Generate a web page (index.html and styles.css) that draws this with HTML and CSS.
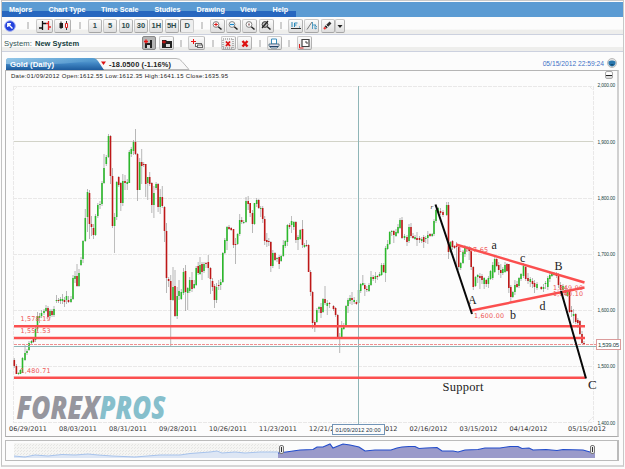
FILE: index.html
```html
<!DOCTYPE html>
<html lang="en">
<head>
<meta charset="utf-8">
<title>Gold (Daily)</title>
<link rel="stylesheet" href="styles.css">
</head>
<body>
<div class="app">
  <nav class="menu">
    <span class="m1">Majors</span><span class="m2">Chart Type</span><span class="m3">Time Scale</span><span class="m4">Studies</span><span class="m5">Drawing</span><span class="m6">View</span><span class="m7">Help</span>
  </nav>
  <div class="bar bar-one">
    <svg class="pointer" viewBox="0 0 12 12"><circle cx="6" cy="6" r="5.3" fill="#2442dc" stroke="#9dabf2"/><path d="M8.5 8.5L4 4M3.8 7V3.8H7" fill="none" stroke="#fff" stroke-width="1.4"/></svg>
    <i class="sep s-a"></i>
    <span class="btn w16"><svg viewBox="0 0 14 11"><path d="M4.500 1v9M1 8h3.500M4.500 3.500H8" stroke="#111" stroke-width="1.300" fill="none"/><path d="M10.500 1v9M8 3.500h2.500M10.500 7H13" stroke="#d22" stroke-width="1.300" fill="none"/></svg></span>
    <span class="btn w16"><svg viewBox="0 0 14 11"><path d="M5 1.500v7.500M10.500 1v9" stroke="#333"/><path d="M3.500 3h3.500v5H3.500z" fill="#222"/><path d="M9.500 3.500h2v4h-2z" fill="#fff" stroke="#d22"/></svg></span>
    <i class="sep s-b"></i>
    <span class="btn">1</span><span class="btn">5</span><span class="btn">10</span><span class="btn">30</span><span class="btn">1H</span><span class="btn">5H</span><span class="btn on">D</span>
    <i class="sep s-c"></i>
    <span class="btn w15"><svg viewBox="0 0 12 11"><path d="M7 6.500l3.500 3" stroke="#222" stroke-width="1.500"/><circle cx="5" cy="4.500" r="2.900" fill="#fff" stroke="#777" stroke-width=".9"/><path d="M3.200 4.500h3.600M5 2.700v3.600" stroke="#d11"/></svg></span>
    <span class="btn w15"><svg viewBox="0 0 12 11"><path d="M7 6.500l3.500 3" stroke="#222" stroke-width="1.500"/><circle cx="5" cy="4.500" r="2.900" fill="#fff" stroke="#777" stroke-width=".9"/><path d="M3 4.500h4" stroke="#1889cc" stroke-width="1.300"/></svg></span>
    <span class="btn w15"><svg viewBox="0 0 12 11"><path d="M7 6.500l3.500 3" stroke="#222" stroke-width="1.500"/><circle cx="5" cy="4.500" r="2.900" fill="#fff" stroke="#777" stroke-width=".9"/><path d="M4 3.500h2v2H4z" fill="#a88"/></svg></span>
    <span class="btn w15"><svg viewBox="0 0 12 11"><path d="M7 6.500l3.500 3" stroke="#222" stroke-width="1.500"/><circle cx="5" cy="4.500" r="2.900" fill="#bbb" stroke="#333" stroke-width=".9"/><path d="M2 8l6-7" stroke="#222" stroke-width="1.200"/></svg></span>
    <i class="sep s-d"></i>
    <span class="btn w15"><svg viewBox="0 0 12 11"><path d="M1 8.500h10" stroke="#333"/><path d="M2 2v5M4.500 7V3h3M4.500 5h2M9 7h1" stroke="#2a88b8" fill="none"/></svg></span>
    <span class="btn w15"><svg viewBox="0 0 12 11"><path d="M1 9.500L6 2" stroke="#777"/><path d="M6.500 2v7M6.500 5h2M9 4v5l2-1M9 5l2 2" stroke="#2a88b8" fill="none" stroke-width=".8"/></svg></span>
    <span class="btn w14"><svg viewBox="0 0 12 11"><path d="M3.500 7.500l5-5" stroke="#333" stroke-width="2.600"/><path d="M4 5l2 2" stroke="#ddd"/><path d="M2 9l1.500-1.500" stroke="#e33" stroke-width="2.300"/></svg></span><span class="btn drop"><svg viewBox="0 0 8 8"><path d="M1.500 3h5L4 6z" fill="#222"/></svg></span>
  </div>
  <div class="bar bar-two">
    <span class="sys">System:</span><b class="sysname">New System</b>
    <span class="btn dark"><svg viewBox="0 0 12 11"><path d="M2 5h5V2h2v8H2z" fill="#222"/><path d="M4 7h3v3H4z" fill="#ddd"/><path d="M1 3.500h4M3 1.500v4" stroke="#e11" stroke-width="1.300"/></svg></span>
    <span class="btn w15"><svg viewBox="0 0 12 11"><path d="M1 2h4l1 1h5v7H1z" fill="#222"/><path d="M5 6h4v3H5z" fill="#ddd"/><path d="M1 4h4M3 2.500v3" stroke="#e11"/></svg></span>
    <i class="sep s-e"></i>
    <span class="btn w17"><svg viewBox="0 0 14 11"><path d="M1 3.500h5M3.500 1v5" stroke="#e11"/><rect x="5.500" y="5.500" width="6" height="3" fill="#fff" stroke="#666"/><rect x="7.500" y="7" width="5" height="2.500" fill="#eee" stroke="#666"/></svg></span>
    <i class="sep s-f"></i>
    <span class="btn w15"><svg viewBox="0 0 12 11"><rect x="1" y="1" width="10" height="9" fill="none" stroke="#777" stroke-dasharray="1 1"/><path d="M4 3.500l4 4.500M8 3.500L4 8" stroke="#d11" stroke-width="1.800"/></svg></span>
    <span class="btn w15"><svg viewBox="0 0 12 11"><path d="M3.500 3l5 5.500M8.500 3l-5 5.500" stroke="#d11" stroke-width="2.400"/></svg></span>
    <i class="sep s-g"></i>
    <span class="btn w15"><svg viewBox="0 0 12 11"><path d="M3.500 1h5v5h-5z" fill="#fff" stroke="#3a8dbd"/><path d="M1 6h10v2L9 10H3L1 8z" fill="#dde" stroke="#467" stroke-width=".8"/><path d="M2 8.500h8" stroke="#246"/></svg></span>
    <i class="sep s-h"></i>
    <span class="btn w15"><svg viewBox="0 0 12 11"><path d="M4 1.500h7v7H4z" fill="#fff" stroke="#444" stroke-width="1.200"/><path d="M7 4h2v2" stroke="#444" fill="none"/><path d="M1.500 6v4h4" stroke="#d22" fill="none"/></svg></span>
  </div>
  <div class="tabs">
    <svg class="tab-shape" viewBox="0 0 190 12">
      <defs><linearGradient id="tab" x2="0" y2="1"><stop offset="0" stop-color="#6bb0dc"/><stop offset=".45" stop-color="#4187c4"/><stop offset="1" stop-color="#1d5b9d"/></linearGradient>
      <linearGradient id="gloss" x2="1" y2="0"><stop offset="0" stop-color="#a6d2ee"/><stop offset="1" stop-color="#4b93cc"/></linearGradient></defs>
      <path d="M86 .5h85q4 0 6 3l7 8H98z" fill="#f8f8f8" stroke="#b8b8b8"/>
      <path d="M1 12V3q0-3 3-3h83q4 0 6 3l6 9z" fill="url(#tab)"/><path d="M1 4q0-4 3-4h83q3 0 5 2Q50 8 1 6z" fill="url(#gloss)" opacity=".7"/>
      <path d="M96 3.500h5L98.500 7z" fill="#d11"/>
      <text x="5" y="9.100" class="tab-name" textLength="44">Gold (Daily)</text><text x="104" y="9.100" class="tab-val" textLength="62">-18.0500 (-1.16%)</text>
    </svg>
    <span class="stamp">05/15/2012 22:59:24</span>
    <svg class="orb" viewBox="0 0 10 10"><circle cx="5" cy="5" r="4.500" fill="#e5e5e5" stroke="#bbb"/><path d="M1.500 3.500Q5 1.500 8.500 3.500Q9 8 5 8.500Q1 8 1.500 3.500z" fill="#2876ad"/><path d="M3 6h4L5 8z" fill="#174a70"/></svg>
  </div>
  <main class="panel">
    <div class="info"><span>Date:01/09/2012 Open:1612.55 Low:1612.35 High:1641.15 Close:1635.95</span><i class="mini"></i></div>
    <svg class="chart" viewBox="6 82 612 354">
      <path class="grid" d="M13 86.500H593M13 198.500H593M13 254.500H593M13 310.500H593M13 366.500H593M13 422.500H593M13.500 86V422M593.500 86V422"/>
      <path d="M14 141.500H593" stroke="#d2d3c8"/>
      <path d="M14 90L18 86M588 422l5-5M589 86l4 4" class="grid"/>
      <g class="brand"><text x="16.500" y="419" textLength="83" lengthAdjust="spacingAndGlyphs" fill="#96969e">FOREX</text><text x="99.500" y="419" textLength="66" lengthAdjust="spacingAndGlyphs" fill="#86bfcc">PROS</text></g>
      <g id="candles"></g>
      <path d="M14 346.500H596M358.500 86V424" stroke="#8fb5b7" fill="none"/>
      <path d="M14 344.500H596" stroke="#ee9090" stroke-dasharray="3 1"/>
      <g class="levels"><path d="M14 326.300H585M14 338H585M14 377.700H585M456 244.500L584.500 282.500M471.500 310.500L584.500 287.500"/></g>
      <g class="level-text"><text x="20.500" y="321" textLength="30">1,578.19</text><text x="20.500" y="332.600" textLength="30">1,551.53</text><text x="20.500" y="373" textLength="30">1,480.71</text><text x="458" y="252" textLength="30">1,717.65</text><text x="474" y="318" textLength="30">1,600.00</text><text x="553" y="290" textLength="30">1,649.90</text><text x="553" y="295.500" textLength="30">1,640.10</text></g>
      <path d="M435.500 204.500L472 314M561 291L586 378.500" stroke="#080808" stroke-width="2" fill="none"/>
      <g class="notes"><text x="430.500" y="209" font-size="7" font-style="italic">r</text><text x="491.500" y="248.500" font-size="12">a</text><text x="520" y="262" font-size="12">c</text><text x="554.500" y="270" font-size="12">B</text><text x="468" y="304" font-size="12">A</text><text x="510" y="319" font-size="12">b</text><text x="539.500" y="310" font-size="12">d</text><text x="588" y="388.500" font-size="13">C</text><text x="442.500" y="391" font-size="12.500" textLength="41">Support</text></g>
      <g class="prices"><text x="597.500" y="87">2,000.00</text><text x="597.500" y="143.500">1,900.00</text><text x="597.500" y="199.500">1,800.00</text><text x="597.500" y="255.500">1,700.00</text><text x="597.500" y="312">1,600.00</text><text x="597.500" y="368">1,500.00</text><text x="597.500" y="424.500">1,400.00</text></g>
      <g class="dates"><text x="9" y="430.500" textLength="38">06/29/2011</text><text x="59" y="430.500" textLength="38">08/03/2011</text><text x="109" y="430.500" textLength="38">08/31/2011</text><text x="159" y="430.500" textLength="38">09/28/2011</text><text x="209" y="430.500" textLength="38">10/26/2011</text><text x="259" y="430.500" textLength="38">11/23/2011</text><text x="309" y="430.500" textLength="38">12/21/2011</text><text x="359.500" y="430.500" textLength="38">01/19/2012</text><text x="409.500" y="430.500" textLength="38">02/16/2012</text><text x="459.500" y="430.500" textLength="38">03/15/2012</text><text x="509.500" y="430.500" textLength="38">04/14/2012</text><text x="568" y="430.500" textLength="38">05/15/2012</text></g>
      <rect x="332.500" y="424.500" width="52" height="10" fill="#fcfcfc" stroke="#7295b8"/><text x="335.500" y="431.500" class="cursor-date" textLength="45">01/09/2012 20:00</text>
    </svg>
  </main>
  <section class="overview">
    <svg viewBox="6 441 612 18">
      <defs><pattern id="dots" width="3" height="3" patternUnits="userSpaceOnUse"><rect width="3" height="3" fill="#f5f5f3"/><path d="M0 0h1v1H0zM2 1h1v1H2z" fill="#e5e5e3"/></pattern></defs>
      <path d="M14 443h265v15H14z" fill="url(#dots)"/>
      <path d="M14 456L25 457L35 455L48 456L62 454.500L75 455L88 454L98 455L112 456L135 457L160 455L180 455L190 453.500L210 452L217 451L222 453L235 452L245 453L260 452L278 452V458H14z" fill="#dde6f4"/>
      <path d="M14 456L25 457L35 455L48 456L62 454.500L75 455L88 454L98 455L112 456L135 457L160 455L180 455L190 453.500L210 452L217 451L222 453L235 452L245 453L260 452L278 452" fill="none" stroke="#a7c3ec"/>
      <path id="mass" d="M278 458V453L286 452L300 450L313 449.500L317 447L323 447L330 444L333 448L338 446L343 444L350 445L359 447L365 451L375 450L391 450L397 448L402 447L409 446.500L415 446.500L419 448.500L426 448L437 447.500L442 451L453 451L458 452L465 450L478 449.500L485 448L500 448L510 446.500L518 446.500L522 448.500L529 448L533 450L546 449.500L557 450.500L563 449.500L583 450L590 452L595 451V458z" fill="#9a9aca"/>
      <path d="M278 453L286 452L300 450L313 449.500L317 447L323 447L330 444L333 448L338 446L343 444L350 445L359 447L365 451L375 450L391 450L397 448L402 447L409 446.500L415 446.500L419 448.500L426 448L437 447.500L442 451L453 451L458 452L465 450L478 449.500L485 448L500 448L510 446.500L518 446.500L522 448.500L529 448L533 450L546 449.500L557 450.500L563 449.500L583 450L590 452" fill="none" stroke="#234dcb" stroke-width="1.200"/>
      <g fill="#eee" stroke="#777"><rect x="279.500" y="445.500" width="4" height="8" rx="1.500"/><rect x="590.500" y="445.500" width="4" height="8" rx="1.500"/></g><path d="M281.500 447v5M592.500 447v5" stroke="#333"/>
    </svg>
  </section>
</div>
<script src="chart.js"></script>
</body>
</html>
```
FILE: styles.css
```css
* { box-sizing: border-box; }
html, body { margin: 0; height: 100%; }
body { background: #fcfcfc; font-family: "Liberation Sans", Arial, sans-serif; overflow: hidden; }
svg { display: block; }
.app { width: 623px; height: 467px; margin-left: 1px; border-left: 1px solid #c2c2c2; border-right: 1px solid #c8c8c8; border-bottom: 2px solid #d6d6d6; border-top: 1px solid #c9c9c9; display: flex; flex-direction: column; }
.menu { height: 15px; margin-top: 1px; flex: none; display: flex; align-items: center; background: linear-gradient(#5b9bd3 0 58%, transparent 58%), linear-gradient(90deg, #2767bf 0 294px, #5b9bd3 294px); color: #fff; font-size: 7.2px; font-weight: bold; white-space: nowrap; padding-left: 7px; }
.m1 { width: 39.500px; } .m2 { width: 52.500px; } .m3 { width: 53.500px; } .m4 { width: 42px; } .m5 { width: 43.500px; } .m6 { width: 32.500px; }
.bar { display: flex; flex: none; align-items: center; border-bottom: 1px solid #ccd1df; background: linear-gradient(#fcfcfc 0 72%, #eeeeec 76%); }
.bar-one { height: 18px; }
.bar-two { height: 17px; }
.pointer { width: 12px; height: 12px; margin-left: 2px; }
.sep { width: 2px; height: 7px; background: #cfcfcf; flex: none; }
.s-a { margin: 0 7px 0 11px; } .s-b { margin: 0 7px 0 6px; } .s-c { margin: 0 7px 0 5px; } .s-d { margin: 0 6px 0 5px; }
.s-e { margin: 0 6px 0 5px; } .s-f { margin: 0 7px 0 5px; } .s-g { margin: 0 6px 0 5px; } .s-h { margin: 0 7px 0 5px; }
.btn { width: 14px; height: 14px; margin-right: 1.400px; flex: none; display: flex; align-items: center; justify-content: center; border: 1px solid #c9c9c9; border-bottom-color: #a5a5a5; border-right-color: #b2b2b2; border-radius: 2px; background: linear-gradient(#fcfcfc, #dedede); color: #2d4c4c; font-size: 7.5px; font-weight: bold; }
.btn svg { width: 12px; height: 11px; flex: none; }
.w14 { width: 14px; margin-right: 0; } .w15 { width: 15px; } .w16 { width: 17px; } .w17 { width: 17px; }
.w16 svg, .w17 svg { width: 14px; }
.drop { width: 10px; margin: 0; } .drop svg { width: 8px; height: 8px; }
.on { background: #eee; border-color: #888 #ccc #ccc #888; }
.dark { background: #b5b5b5; border-color: #888; margin-right: 3px; }
.sys { font-size: 7.7px; color: #355; margin-left: 2px; width: 31px; }
.sysname { font-size: 7.5px; color: #143c3c; width: 107px; }
.tabs { height: 18px; padding-top: 6px; flex: none; display: flex; margin-left: 3px; }
.tab-shape { width: 190px; height: 12px; flex: none; }
.tab-name { fill: #fff; font-size: 7.8px; font-weight: bold; }
.tab-val { fill: #222; font-size: 7.4px; font-weight: bold; }
.stamp { margin-left: auto; color: #4170c6; font-size: 6.7px; line-height: 11px; white-space: nowrap; }
.orb { width: 10px; height: 10px; margin: 0 6px 0 3px; }
.panel { height: 367px; flex: none; width: 614px; margin-left: 3px; border: 1px solid #b5b5b5; border-right: 2px solid #d0d0d0; border-bottom-color: #aaa; }
.info { height: 11px; display: flex; justify-content: space-between; padding: 0 4px 0 5px; font-size: 6px; line-height: 11px; color: #222; white-space: nowrap; }
.info span { letter-spacing: 0.290px; }
.mini { width: 8px; height: 8px; border: 1px solid #aaa; border-radius: 2px; background: linear-gradient(#fff 0 55%, #222 55% 75%, #ddd 75%); }
.chart { width: 612px; height: 354px; }
.grid { stroke: #e9e8e8; stroke-dasharray: 4 1; fill: none; }
.brand { font: italic 800 31px "Open Sans", sans-serif; }
.levels { stroke: #fb4f4f; stroke-width: 2.400; fill: none; }
.level-text { fill: #ee5555; font: 6.400px "DejaVu Sans", sans-serif; }
.notes { fill: #222; font-family: "Liberation Serif", serif; }
.prices { fill: #244; font-size: 4.800px; letter-spacing: -0.140px; }
.dates { fill: #333; font: 6.500px "DejaVu Sans", sans-serif; }
.cursor-date { fill: #234; font-size: 5.600px; }
.wick { stroke: #909090; stroke-width: .8; opacity: .8; }
.up { fill: #2cb82c; } .down { fill: #bd1818; }
.tag-box { fill: #fff; stroke: #db9c9c; }
.tag-text { fill: #244; font-size: 6px; }
.overview { width: 614px; height: 21px; flex: none; margin: 3px 0 0 3px; border: 1px solid #bbb; border-right-width: 2px; }
.overview svg { width: 612px; height: 18px; }
```
FILE: chart.js
```js
// x, high, body top, body bottom, low, direction
const rows = `14.3 358 360 366 368 r;16.4 364 366 374 374 r;18.4 372 373 374 375 g;20.4 369 370 374 374 g;22.5 357 358 373 373 g;25 345 353 360 361 g;27 349 351 353 355 g;29 341 343 350 351 g;31.500 340 341 343 345 g;33.500 337 338 342 343 r;35.500 327 329 340 342 g;37.500 312 316 329 331 g;39.500 313 316 318 323 g;41.500 310 313 316 318 g;44 309 311 313 315 g;46 305 308 311 312 g;48 306 308 317 318 r;50 309 311 316 318 g;52 309 311 315 317 r;54 306 309 315 317 g;56.500 295 300 301 303 g;58.500 298 300 301 303 r;60.500 297 299 301 304 g;62.500 294 299 301 304 g;64.500 297 300 302 307 r;66.500 291 296 300 304 g;68.500 296 300 302 303 r;71 296 299 302 303 g;73 275 278 299 300 g;75 271 276 279 283 g;77 264 276 286 287 r;79 269 273 286 287 g;81 257 260 265 266 g;83 240 241 259 263 g;85.300 209 218 241 242 g;87.500 189 192 217 232 g;89.500 190 193 224 239 r;91.500 216 224 227 236 r;93.500 224 228 235 239 r;95.500 214 216 235 236 g;97.800 203 205 216 218 g;100 201 204 205 209 g;102 181 183 204 206 g;104 154 168 183 184 g;106.300 155 157 164 166 g;108.500 134 136 157 158 g;110.500 135 136 176 184 r;112.500 168 176 226 228 r;114.600 213 217 226 253 g;116.700 181 182 217 220 g;118.700 176 177 185 187 r;120.800 182 183 203 211 r;122.800 174 181 203 206 g;125 175 181 183 190 r;127.300 179 182 184 190 g;129.300 150 152 183 183 g;131.300 147 149 154 157 g;133.500 140 142 151 155 g;135.500 129 142 154 155 r;137.500 153 154 190 201 r;139.700 158 162 190 190 g;141.700 149 162 166 184 r;143.700 162 164 165 167 r;145.700 164 164 184 197 r;147.700 177 177 183 200 g;149.700 172 177 184 186 r;151.800 182 183 205 213 r;153.900 186 193 205 218 g;156.100 182 184 188 190 g;158.100 183 184 207 212 r;160.200 189 197 207 214 g;162.300 186 197 206 208 r;164.500 206 207 231 242 r;166.500 223 231 278 293 r;168.600 277 279 281 287 r;170.700 275 281 300 347 r;173 267 287 300 301 g;175 270 286 316 317 r;177.200 287 296 316 319 g;179 280 291 296 300 g;181.300 289 292 299 300 g;183.500 268 272 293 295 g;185.500 265 271 292 311 r;187.700 287 288 293 310 g;189.700 277 280 291 293 g;192 272 280 289 292 r;194.200 280 284 288 289 g;196.200 266 268 285 286 g;198.200 262 266 273 275 r;200 257 265 274 275 g;202 262 264 272 280 r;204 262 264 271 273 g;206 262 263 264 268 r;208.300 255 262 268 278 r;210.500 267 268 279 294 r;212.500 278 281 287 291 r;214.500 284 286 300 308 r;216.500 283 287 300 303 g;218.700 280 285 286 290 r;220.700 279 282 285 290 g;222.800 252 253 282 283 g;224.800 238 240 253 254 g;227 226 227 241 250 g;229 225 227 229 230 r;231.200 227 228 230 231 r;233.500 229 229 245 248 r;235.500 238 244 245 264 r;237.600 233 234 244 245 g;239.700 214 220 234 236 g;241.700 217 220 222 224 r;243.700 220 222 223 224 g;246 197 201 222 223 g;248.200 196 201 204 210 r;250.200 203 203 213 217 r;252.500 210 213 224 233 r;254.500 203 203 224 225 g;256.700 198 200 204 207 g;258.700 199 200 208 209 r;260.700 206 208 209 217 g;262.700 206 208 219 223 r;264.700 216 219 241 245 r;266.800 233 240 242 247 r;268.800 238 241 242 246 r;270.800 241 242 266 272 r;272.800 250 253 266 268 g;275 252 253 260 261 r;277 257 258 259 262 g;279.200 255 257 264 269 r;281.200 255 256 261 262 g;283.300 240 245 256 257 g;285.300 240 241 246 248 g;287.400 224 225 242 246 g;289.500 223 225 227 229 r;291.600 216 221 225 233 g;293.800 221 222 227 230 g;295.900 221 222 240 243 r;298 235 237 240 250 g;300.200 229 230 239 240 g;302.500 220 229 245 248 r;304.500 243 245 247 248 g;306.500 240 245 246 247 r;308.600 244 245 272 272 r;310.600 270 272 292 296 r;312.600 291 292 323 329 r;314.800 320 322 327 332 r;316.800 308 310 322 323 g;319 306 307 309 313 g;321 303 307 313 318 r;323 298 299 312 313 g;325 286 299 303 305 r;327.300 300 303 306 315 g;329.500 302 303 304 308 r;333.500 305 306 309 311 r;335.600 307 308 315 317 r;337.700 314 315 337 339 r;339.700 333 338 339 353 r;341.700 321 328 338 339 g;343.800 323 326 329 330 g;346 305 306 326 326 g;348 298 300 306 313 g;350 295 298 301 304 g;352 292 298 300 305 r;354.200 297 300 302 304 g;356.400 300 302 304 305 r;358.600 285 290 303 304 g;360.700 283 284 291 293 g;362.800 275 283 285 286 g;364.800 283 285 289 296 r;366.800 286 289 290 292 r;369 283 285 291 292 g;371 271 277 285 286 g;373.200 275 277 279 281 r;375.400 272 276 279 283 g;377.400 275 276 277 280 r;379.600 272 274 276 277 g;381.600 263 265 275 276 g;383.700 263 265 272 273 r;385.600 246 248 273 282 g;387.600 240 244 249 250 g;389.700 231 232 244 245 g;391.700 230 231 232 236 g;393.800 230 231 235 243 r;396 229 232 236 237 g;398 224 227 233 234 g;400 218 220 228 229 g;402 217 220 238 239 r;404.500 234 236 238 240 g;407 235 237 242 246 r;409 224 227 241 243 g;411 223 227 236 238 r;413 233 236 238 239 r;415 235 237 239 240 g;417 232 238 240 246 r;419.500 236 238 240 243 r;421.700 237 239 241 243 g;423.700 235 237 242 248 r;425.700 236 238 239 243 g;427.800 231 235 238 244 g;430 233 234 236 237 r;432.200 233 234 236 237 g;434 219 221 234 236 g;436 209 210 221 223 g;438 207 208 212 213 g;440.500 208 211 213 215 r;443 210 212 215 217 r;446.700 202 205 215 216 g;448.500 202 205 252 259 r;450.500 241 242 252 253 g;452.500 240 241 247 250 r;454.500 245 246 248 249 r;456.500 242 246 247 266 r;458.700 244 247 267 270 r;460.700 262 263 268 270 g;463 250 252 263 264 g;464.900 245 248 254 257 g;467 246 247 249 252 r;469.200 246 248 251 260 r;471.200 250 251 267 270 r;473.300 266 267 287 290 r;475.500 276 277 286 287 g;477.700 274 275 277 283 g;479.900 273 276 278 289 r;482 274 276 280 284 r;484.200 277 278 284 289 g;486.300 279 280 284 287 r;488.400 276 278 284 288 g;490.500 270 271 279 280 g;492.700 262 265 278 280 g;494.700 257 259 272 273 g;496.700 258 259 266 267 r;498.700 262 265 270 275 r;500.800 264 270 273 278 r;502.800 267 269 273 275 g;505 262 265 272 273 g;507 263 264 271 272 r;508.800 264 264 288 293 r;510.800 285 287 297 303 r;512.800 291 292 297 298 g;514.900 280 285 292 295 g;517 281 284 287 288 r;519 277 278 286 288 g;521 273 274 279 281 g;523.500 263 266 276 278 g;525.700 265 267 279 281 r;528 273 278 281 284 r;530.300 277 279 282 287 g;532.500 278 281 284 288 r;534.500 280 283 287 293 r;537 282 284 288 290 g;541.300 286 287 289 290 r;543.500 284 287 289 292 g;545.500 281 283 284 289 g;547.800 276 278 287 290 g;549.800 273 275 279 282 g;551.900 272 273 276 277 g;554 272 273 275 276 g;556.400 272 273 276 278 r;558.500 273 276 285 288 r;560.600 282 285 290 292 r;563 284 286 290 294 g;565.300 286 290 293 296 r;567.400 288 292 296 297 g;569.500 290 290 312 313 r;571.500 306 310 312 317 r;573.600 309 314 316 323 g;575.700 313 314 322 324 r;577.800 318 320 323 328 r;579.900 320 321 334 335 r;582 331 334 343 344 r;584 341 343 345 345 r`;

const ns = "http://www.w3.org/2000/svg";
const layer = document.getElementById("candles");

function add(parent, tag, attrs) {
  const el = document.createElementNS(ns, tag);
  for (const key in attrs) el.setAttribute(key, attrs[key]);
  parent.appendChild(el);
  return el;
}

for (const row of rows.split(";")) {
  const part = row.split(" ");
  const [x, high, top, bottom, low] = part.slice(0, 5).map(Number);
  add(layer, "path", { class: "wick", d: `M${x} ${high}V${low}` });
  add(layer, "rect", {
    class: part[5] === "g" ? "up" : "down",
    x: x - 0.8, y: top, width: 1.6, height: Math.max(1, bottom - top)
  });
}

// last price tag on the right axis
const chart = document.querySelector(".chart");
add(chart, "rect", { class: "tag-box", x: 596.5, y: 339.5, width: 24, height: 10 });
const tag = add(chart, "text", { class: "tag-text", x: 598, y: 346.5, textLength: 21 });
tag.textContent = "1,539.05";
chart.style.overflow = "visible";
```
